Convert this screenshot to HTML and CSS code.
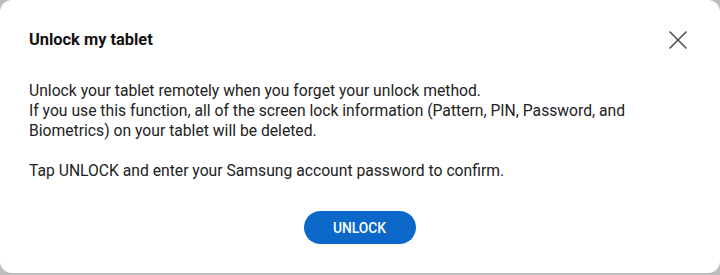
FILE: index.html
```html
<!DOCTYPE html>
<html lang="en">
<head>
<meta charset="utf-8">
<title>Unlock my tablet</title>
<link rel="stylesheet" href="styles.css">
</head>
<body>
<div class="dialog">
  <div class="dialog-header">
    <h1 class="dialog-title">Unlock my tablet</h1>
    <button class="close-btn" aria-label="Close">
      <svg width="18" height="18" viewBox="0 0 18 18"><path d="M0.5 0.5 L17.5 17.5 M17.5 0.5 L0.5 17.5" stroke="#4a4a4a" stroke-width="1.5" fill="none"/></svg>
    </button>
  </div>
  <p class="dialog-text">Unlock your tablet remotely when you forget your unlock method.<br>If you use this function, all of the screen lock information (Pattern, PIN, Password, and<br>Biometrics) on your tablet will be deleted.</p>
  <p class="dialog-text confirm">Tap UNLOCK and enter your Samsung account password to confirm.</p>
  <div class="dialog-actions">
    <button class="primary-btn">UNLOCK</button>
  </div>
</div>
</body>
</html>
```

FILE: styles.css
```css
html, body {
  margin: 0;
  padding: 0;
}
body {
  width: 720px;
  height: 275px;
  background: #bdbdbd;
  font-family: Roboto, "Liberation Sans", sans-serif;
  overflow: hidden;
}
.dialog {
  height: 273px;
  box-sizing: border-box;
  background: #ffffff;
  border-radius: 12px;
  padding: 30px 30px 0 29px;
}
.dialog-header {
  display: flex;
  justify-content: space-between;
  align-items: center;
  height: 20px;
}
.dialog-title {
  margin: 0;
  font-size: 16.4px;
  line-height: 20px;
  font-weight: 700;
  color: #111111;
}
.close-btn {
  border: 0;
  background: none;
  padding: 0;
  width: 18px;
  height: 18px;
  margin-right: 3px;
  display: flex;
}
.dialog-text {
  margin: 31px 0 0;
  font-size: 15.7px;
  line-height: 20px;
  color: #222222;
}
.dialog-text.confirm {
  margin-top: 20px;
}
.dialog-actions {
  display: flex;
  justify-content: center;
  margin-top: 30px;
}
.primary-btn {
  width: 112px;
  height: 33px;
  border: 0;
  border-radius: 17px;
  background: #0b68c9;
  color: #ffffff;
  font-family: Roboto, "Liberation Sans", sans-serif;
  font-size: 13.8px;
  font-weight: 500;
  padding: 0;
}
```
